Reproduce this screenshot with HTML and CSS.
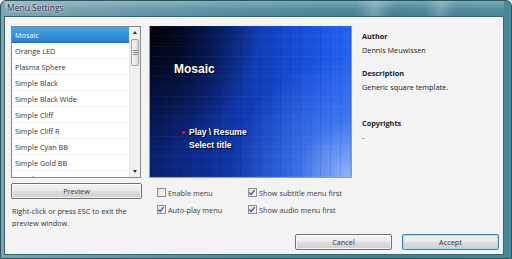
FILE: index.html
```html
<html>
<head>
    <meta charset="utf-8">
    <link rel="stylesheet" href="styles.css">
</head>
<body>

<div class="window">
  <div class="titlebar"><span class="title">Menu Settings</span></div>

  <div class="client">
    <div class="main">

      <div class="left">
        <div class="listbox">
          <ul class="items">
            <li class="sel">Mosaic</li>
            <li>Orange LED</li>
            <li>Plasma Sphere</li>
            <li>Simple Black</li>
            <li>Simple Black Wide</li>
            <li>Simple Cliff</li>
            <li>Simple Cliff R</li>
            <li>Simple Cyan BB</li>
            <li>Simple Gold BB</li>
            <li>Simple Green</li>
          </ul>
          <div class="scrollbar">
            <div class="arrow up"></div>
            <div class="track"><div class="thumb"><span></span><span></span><span></span></div></div>
            <div class="arrow down"></div>
          </div>
        </div>
        <button class="btn preview-btn">Preview</button>
        <p class="hint">Right-click or press ESC to exit the preview window.</p>
      </div>

      <div class="middle">
        <div class="preview">
          <div class="pv-title">Mosaic</div>
          <ul class="pv-menu">
            <li class="active">Play \ Resume</li>
            <li>Select title</li>
          </ul>
        </div>
        <div class="options">
          <label class="check"><span class="box"></span>Enable menu</label>
          <label class="check on"><span class="box"><svg viewBox="0 0 9 9" width="9" height="9"><path d="M1.6 4.6 L3.5 6.8 L7.4 1.8" fill="none" stroke="#2b4fa0" stroke-width="1.5"/></svg></span>Show subtitle menu first</label>
          <label class="check on"><span class="box"><svg viewBox="0 0 9 9" width="9" height="9"><path d="M1.6 4.6 L3.5 6.8 L7.4 1.8" fill="none" stroke="#2b4fa0" stroke-width="1.5"/></svg></span>Auto-play menu</label>
          <label class="check on"><span class="box"><svg viewBox="0 0 9 9" width="9" height="9"><path d="M1.6 4.6 L3.5 6.8 L7.4 1.8" fill="none" stroke="#2b4fa0" stroke-width="1.5"/></svg></span>Show audio menu first</label>
        </div>
      </div>

      <div class="info">
        <h4>Author</h4>
        <p>Dennis Meuwissen</p>
        <h4>Description</h4>
        <p class="desc">Generic square template.</p>
        <h4>Copyrights</h4>
        <p>-</p>
      </div>

    </div>

    <div class="footer">
      <button class="btn">Cancel</button>
      <button class="btn default">Accept</button>
    </div>
  </div>
</div>

</body>
</html>
```

FILE: styles.css
```css
* {
  margin: 0px;
  padding: 0px;
  box-sizing: border-box;
}
body {
  width: 512px;
  height: 259px;
  overflow: hidden;
  font-family: "Open Sans", sans-serif;
  font-size: 7.3px;
  color: #2a2a2a;
}
.window {
  width: 512px;
  height: 259px;
  display: flex;
  flex-direction: column;
  padding: 0 7px 3px 3px;
  border-radius: 6px 6px 0 0;
  border: 1px solid #2c5561;
  background: linear-gradient(to right, #7ea3b0, #4f8b9c 45%, #3f7f90 75%, #4a8797);
}
.titlebar {
  height: 15px;
  flex: none;
  padding-left: 3px;
  background:
    linear-gradient(to bottom, rgba(255,255,255,0.3), rgba(255,255,255,0.06) 60%, transparent),
    linear-gradient(100deg, transparent 70%, rgba(255,255,255,0.25) 74%, transparent 78%, transparent 84%, rgba(255,255,255,0.2) 87%, transparent 90%);
}
.title {
  font-family: "Open Sans", sans-serif;
  font-size: 8.5px;
  line-height: 14px;
  color: #1c2b45;
  text-shadow: 0 0 3px rgba(255,255,255,0.9), 0 0 2px rgba(255,255,255,0.8);
}
.client {
  flex: 1;
  background: #f3f3f3;
  border: 1px solid #35666f;
  padding: 9px 4px 0 6px;
  display: flex;
  flex-direction: column;
}
.main {
  display: flex;
  height: 201px;
  overflow: hidden;
}

/* left column */
.left {
  width: 130px;
  flex: none;
}
.listbox {
  height: 152px;
  border: 1px solid #828790;
  background: #fff;
  display: flex;
  overflow: hidden;
}
.items {
  list-style: none;
  flex: 1;
}
.items li {
  height: 16px;
  line-height: 16px;
  padding-left: 3px;
  border-bottom: 1px solid #f0f0f0;
  color: #333;
  white-space: nowrap;
}
.items li.sel {
  background: linear-gradient(to bottom, #4aa3e6, #2a80d0);
  color: #fff;
  border-bottom-color: #1f6fb8;
}
.scrollbar {
  width: 11px;
  flex: none;
  display: flex;
  flex-direction: column;
  background: #f0f0f0;
  border-left: 1px solid #e6e6e6;
}
.arrow {
  height: 11px;
  position: relative;
}
.arrow::after {
  content: "";
  position: absolute;
  left: 3px;
  top: 4px;
  border-left: 2.5px solid transparent;
  border-right: 2.5px solid transparent;
}
.arrow.up::after {
  border-bottom: 3px solid #333;
}
.arrow.down::after {
  border-top: 3px solid #333;
}
.track {
  flex: 1;
  padding: 1px 1px 0 1px;
}
.thumb {
  height: 27px;
  border: 1px solid #a0a0a0;
  border-radius: 2px;
  background: linear-gradient(to right, #f4f4f4, #dedede);
  display: flex;
  flex-direction: column;
  justify-content: center;
  align-items: center;
  gap: 1px;
}
.thumb span {
  width: 5px;
  height: 1px;
  background: #8a8a8a;
}
.btn {
  font-family: "Open Sans", sans-serif;
  font-size: 7.3px;
  color: #333;
  height: 16px;
  border: 1px solid #707070;
  border-radius: 2px;
  background: linear-gradient(to bottom, #f3f3f3 0%, #ebebeb 48%, #dddddd 52%, #cfcfcf 100%);
  box-shadow: inset 0 0 0 1px rgba(255,255,255,0.7);
}
.preview-btn {
  display: block;
  width: 131px;
  margin-top: 5px;
  color: #2e3b58;
}
.hint {
  margin-top: 6px;
  padding-left: 1px;
  line-height: 12px;
  color: #333;
}

/* preview column */
.middle {
  width: 203px;
  flex: none;
  margin-left: 8px;
}
.preview {
  height: 153px;
  margin-top: -1px;
  border: 1px solid #9c9c9c;
  color: #fff;
  font-family: "Liberation Sans", Arial, sans-serif;
  font-weight: bold;
  padding: 37px 0 0 24px;
  background:
    linear-gradient(rgba(255,255,255,0.04) 1px, transparent 1px) 0 0 / 10px 10px,
    linear-gradient(90deg, rgba(0,0,30,0.1) 1px, transparent 1px) 0 0 / 10px 10px,
    radial-gradient(circle at 100% 100%, rgba(150,185,252,0.95), rgba(90,140,245,0.5) 22%, transparent 48%),
    radial-gradient(ellipse 55% 85% at 0 0, #000105, rgba(0,4,22,0.8) 35%, transparent 100%),
    linear-gradient(to right, #08206e 0%, #0c2f98 30%, #1142c4 60%, #1a56e6 85%, #2464f2 100%);
}
.pv-title {
  font-size: 12px;
  line-height: 12px;
  text-shadow: 1px 1px 1px #000;
}
.pv-menu {
  list-style: none;
  margin-top: 51px;
  padding-left: 15px;
  font-size: 8.5px;
  line-height: 13px;
  text-shadow: 1px 1px 1px #000;
}
.pv-menu li {
  position: relative;
}
.pv-menu li.active::before {
  content: "";
  position: absolute;
  left: -7px;
  top: 5px;
  width: 3px;
  height: 3px;
  background: #e01010;
}
.options {
  display: grid;
  grid-template-columns: 91px 1fr;
  padding-left: 8px;
  margin-top: 6px;
}
.check {
  display: flex;
  align-items: center;
  gap: 2px;
  height: 17px;
  color: #3a3a3a;
  white-space: nowrap;
}
.box {
  width: 9px;
  height: 9px;
  flex: none;
  border: 1px solid #8e8f8f;
  background: linear-gradient(135deg, #e0e0e0, #fafafa);
  display: flex;
}
.box svg {
  margin: -1px 0 0 -1px;
}

/* info column */
.info {
  margin-left: 10px;
  padding-top: 3px;
  line-height: 14px;
  color: #222;
}
.info h4 {
  font-weight: bold;
  font-size: 7.3px;
}
.info p {
  margin-bottom: 9.4px;
}
.info p.desc {
  margin-bottom: 22px;
}

/* footer */
.footer {
  display: flex;
  justify-content: flex-end;
  gap: 10px;
  margin-top: 7px;
}
.footer .btn {
  width: 97px;
}
.footer .btn.default {
  border-color: #3c7fb1;
  box-shadow: inset 0 0 0 1px #a6dcf5;
}
```
